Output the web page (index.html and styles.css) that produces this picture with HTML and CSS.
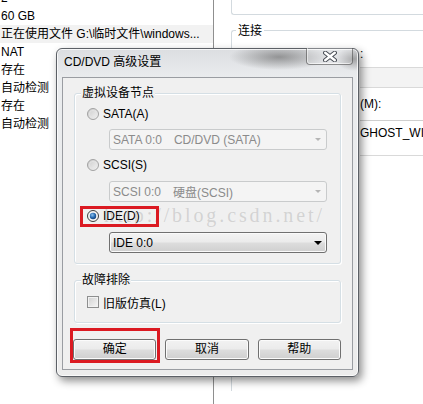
FILE: index.html
```html
<!DOCTYPE html>
<html lang="zh-CN">
<head>
<meta charset="utf-8">
<title>CD/DVD 高级设置</title>
<link rel="stylesheet" href="styles.css">
</head>
<body>
<div class="screen">
  <div class="list">
    <div class="row first">2</div>
    <div class="row">60 GB</div>
    <div class="row sel">正在使用文件 G:\临时文件\windows...</div>
    <div class="row">NAT</div>
    <div class="row">存在</div>
    <div class="row">自动检测</div>
    <div class="row">存在</div>
    <div class="row">自动检测</div>
  </div>
  <div class="panel">
    <div class="topbox"></div>
    <div class="conn">
      <div class="conn-legend">连接</div>
      <div class="conn-body">
        <div class="prow colon">:</div>
        <div class="band"></div>
        <div class="prow mrow">(M):</div>
        <div class="field">GHOST_WIN7_SP1</div>
      </div>
    </div>
  </div>
</div>

<div class="dialog">
  <div class="titlebar">
    <div class="title">CD/DVD 高级设置</div>
    <div class="close">
      <svg width="14" height="11" viewBox="0 0 14 11">
        <path d="M2.2 1.8 L11.8 9.2 M11.8 1.8 L2.2 9.2" stroke="#4a4f57" stroke-width="4.4" stroke-linecap="round" fill="none"/>
        <path d="M2.2 1.8 L11.8 9.2 M11.8 1.8 L2.2 9.2" stroke="#ffffff" stroke-width="2.4" stroke-linecap="round" fill="none"/>
      </svg>
    </div>
  </div>
  <div class="client">
    <div class="group g1">
      <div class="legend">虚拟设备节点</div>
      <div class="opt o-sata">
        <svg class="radio" width="12" height="12" viewBox="0 0 12 12">
          <defs><linearGradient id="rg" x1="0" y1="0" x2="1" y2="1"><stop offset="0" stop-color="#c9c9c9"/><stop offset="1" stop-color="#f6f6f6"/></linearGradient></defs>
          <circle cx="6" cy="6" r="5.5" fill="url(#rg)" stroke="#a2a2a2"/>
          <circle cx="6" cy="6" r="3.6" fill="none" stroke="#e4e4e4" stroke-width="0.8"/>
        </svg>
        <span>SATA(A)</span>
      </div>
      <div class="combo off c-sata"><span class="v1">SATA 0:0</span><span>CD/DVD (SATA)</span><i class="arrow"></i></div>
      <div class="opt o-scsi">
        <svg class="radio" width="12" height="12" viewBox="0 0 12 12">
          <circle cx="6" cy="6" r="5.5" fill="url(#rg)" stroke="#a2a2a2"/>
          <circle cx="6" cy="6" r="3.6" fill="none" stroke="#e4e4e4" stroke-width="0.8"/>
        </svg>
        <span>SCSI(S)</span>
      </div>
      <div class="combo off c-scsi"><span class="v1">SCSI 0:0</span><span>硬盘(SCSI)</span><i class="arrow"></i></div>
      <div class="opt o-ide">
        <svg class="radio" width="12" height="12" viewBox="0 0 12 12">
          <defs><radialGradient id="dot" cx="0.4" cy="0.35" r="0.7"><stop offset="0" stop-color="#8fc3ef"/><stop offset="0.55" stop-color="#2a6db4"/><stop offset="1" stop-color="#123d73"/></radialGradient></defs>
          <circle cx="6" cy="6" r="5.5" fill="#f4f4f4" stroke="#3e3e3e"/>
          <circle cx="6" cy="6" r="3.2" fill="url(#dot)"/>
        </svg>
        <span>IDE(D)</span>
      </div>
      <div class="combo on c-ide"><span>IDE 0:0</span><i class="arrow"></i></div>
    </div>
    <div class="group g2">
      <div class="legend">故障排除</div>
      <div class="opt o-check">
        <span class="check"></span>
        <span>旧版仿真(L)</span>
      </div>
    </div>
    <div class="buttons">
      <div class="btn">确定</div>
      <div class="btn">取消</div>
      <div class="btn">帮助</div>
    </div>
  </div>
</div>

<div class="watermark">http://blog.csdn.net/</div>
<div class="mark mark-ide"></div>
<div class="mark mark-ok"></div>
</body>
</html>
```

FILE: styles.css
```css
html, body {
  margin: 0;
  padding: 0;
  background: #ffffff;
}

body {
  position: relative;
  width: 423px;
  height: 404px;
  overflow: hidden;
  font: 12px "Liberation Sans", "Noto Sans CJK SC", sans-serif;
  color: #000;
}

/* ---------- background window ---------- */
.screen {
  display: flex;
  height: 404px;
  overflow: hidden;
}

.list {
  width: 213px;
  flex: none;
  border-right: 1px solid #8f8f8f;
}

.row {
  height: 18px;
  line-height: 18px;
  padding-left: 1px;
  white-space: nowrap;
}

.row.first {
  margin-top: -11px;
}

.row.sel {
  background: #f2f2f2;
}

.panel {
  flex: 1;
  min-width: 0;
  overflow: hidden;
}

.topbox {
  margin-left: 17px;
  height: 15px;
  box-sizing: border-box;
  border-left: 1px solid #d3dadf;
  border-bottom: 1px solid #d3dadf;
  border-bottom-left-radius: 3px;
}

.conn {
  margin: 15px 0 0 17px;
  border-left: 1px solid #d3dadf;
  border-top: 1px solid #d3dadf;
  border-top-left-radius: 3px;
  height: 360px;
}

.conn-legend {
  width: fit-content;
  margin: -7px 0 0 4px;
  padding: 0 2px;
  height: 14px;
  line-height: 14px;
  background: #fff;
}

.conn-body {
  padding-left: 128px;
}

.prow {
  height: 16px;
  line-height: 16px;
  white-space: nowrap;
}

.colon {
  margin-top: 8px;
}

.band {
  margin-top: 5px;
  height: 21px;
  box-sizing: border-box;
  border-top: 1px solid #d9d9d9;
  border-bottom: 1px solid #d9d9d9;
  background: #f3f3f3;
}

.mrow {
  margin-top: 8px;
}

.field {
  margin-top: 8px;
  height: 36px;
  box-sizing: border-box;
  border-top: 1px solid #cfcfcf;
  border-bottom: 1px solid #d9d9d9;
  padding-top: 5px;
  line-height: 14px;
  white-space: nowrap;
  overflow: hidden;
}

/* ---------- dialog ---------- */
.dialog {
  position: absolute;
  left: 56px;
  top: 48px;
  width: 303px;
  height: 329px;
  box-sizing: border-box;
  border: 1px solid #5c6066;
  border-radius: 6px;
  padding: 0 5px 6px;
  display: flex;
  flex-direction: column;
  background:
    radial-gradient(ellipse 50px 13px at 222px 8px, rgba(95, 95, 95, 0.6), rgba(95, 95, 95, 0)),
    radial-gradient(ellipse 18px 12px at 297px 10px, rgba(95, 95, 95, 0.5), rgba(95, 95, 95, 0)),
    linear-gradient(#dcdee1, #eaecee 28px, #ececec);
  box-shadow: 3px 4px 9px rgba(0, 0, 0, 0.45), inset 0 0 0 1px rgba(255, 255, 255, 0.75);
}

.titlebar {
  height: 28px;
  display: flex;
  align-items: flex-start;
  flex: none;
}

.title {
  margin: 6px 0 0 2px;
  line-height: 14px;
  white-space: nowrap;
}

.close {
  margin-left: auto;
  margin-top: -1px;
  width: 47px;
  height: 17px;
  box-sizing: border-box;
  border: 1px solid rgba(60, 60, 60, 0.55);
  border-top: none;
  border-radius: 0 0 4px 4px;
  background: linear-gradient(rgba(255, 255, 255, 0.25), rgba(255, 255, 255, 0.05));
  box-shadow: inset 0 -1px 0 rgba(255, 255, 255, 0.6), inset 1px 0 0 rgba(255, 255, 255, 0.5);
  display: flex;
  align-items: center;
  justify-content: center;
}

.close svg {
  display: block;
  margin-top: 1px;
}

.client {
  height: 293px;
  box-sizing: border-box;
  border: 1px solid #9a9da2;
  background: #f0f0f0;
  padding: 15px 11px 0;
  flex: none;
}

.group {
  border: 1px solid #d5dfe5;
  border-radius: 3px;
  box-shadow: inset 1px 1px 0 #ffffff, 1px 1px 0 #ffffff;
}

.g1 {
  padding-bottom: 10px;
}

.g2 {
  margin-top: 16px;
  padding-bottom: 13px;
}

.legend {
  width: fit-content;
  margin: -8px 0 0 6px;
  padding: 0 1px;
  height: 14px;
  line-height: 14px;
  background: #f0f0f0;
  white-space: nowrap;
}

.opt {
  display: flex;
  align-items: center;
  height: 16px;
  padding-left: 12px;
  white-space: nowrap;
}

.o-sata { margin-top: 6px; }
.o-scsi { margin-top: 7px; }
.o-ide { margin-top: 6px; }
.o-check { margin-top: 8px; height: 14px; }

.radio {
  display: block;
  margin-right: 4px;
  flex: none;
}

.check {
  width: 12px;
  height: 12px;
  box-sizing: border-box;
  border: 1px solid #8e8f8f;
  background: linear-gradient(135deg, #d0d0d0, #f7f7f7);
  box-shadow: inset 0 0 0 1px #f2f2f2;
  margin-right: 4px;
  flex: none;
}

.combo {
  margin-left: 34px;
  width: 218px;
  height: 21px;
  box-sizing: border-box;
  border-radius: 3px;
  display: flex;
  align-items: center;
  padding-left: 3px;
  position: relative;
  white-space: nowrap;
}

.combo .v1 {
  margin-right: 12px;
}

.combo.off {
  border: 1px solid #c9cbcc;
  background: #f4f4f4;
  color: #8b8b8b;
}

.combo.on {
  border: 1px solid #707070;
  background: linear-gradient(#f3f3f3 0%, #ebebeb 48%, #dddddd 52%, #cfcfcf 100%);
  box-shadow: inset 0 0 0 1px #fafafa;
}

.c-sata { margin-top: 7px; }
.c-scsi { margin-top: 8px; }
.c-ide { margin-top: 8px; }

.arrow {
  margin-left: auto;
  width: 0;
  height: 0;
  border-left: 3px solid transparent;
  border-right: 3px solid transparent;
  border-top: 3px solid #b5b5b5;
  margin-right: 5px;
}

.combo.on .arrow {
  border-left-width: 4px;
  border-right-width: 4px;
  border-top: 4px solid #000;
  margin-right: 4px;
}

.buttons {
  display: flex;
  gap: 9px;
  margin: 16px 0 0 -1px;
}

.btn {
  width: 84px;
  height: 21px;
  box-sizing: border-box;
  border: 1px solid #707070;
  border-radius: 3px;
  background: linear-gradient(#f2f2f2 0%, #ebebeb 48%, #dddddd 52%, #cfcfcf 100%);
  box-shadow: inset 0 0 0 1px #fbfbfb;
  text-align: center;
  line-height: 19px;
}

/* ---------- annotations over the picture ---------- */
.watermark {
  position: absolute;
  left: 104px;
  top: 205px;
  font: 20px/20px "Liberation Serif", serif;
  letter-spacing: 2.9px;
  color: rgba(140, 140, 140, 0.3);
  white-space: nowrap;
  pointer-events: none;
}

.mark {
  position: absolute;
  box-sizing: border-box;
  border: 3px solid #db1a22;
  pointer-events: none;
}

.mark-ide {
  left: 80px;
  top: 206px;
  width: 79px;
  height: 21px;
}

.mark-ok {
  left: 70px;
  top: 328px;
  width: 90px;
  height: 35px;
}
```
